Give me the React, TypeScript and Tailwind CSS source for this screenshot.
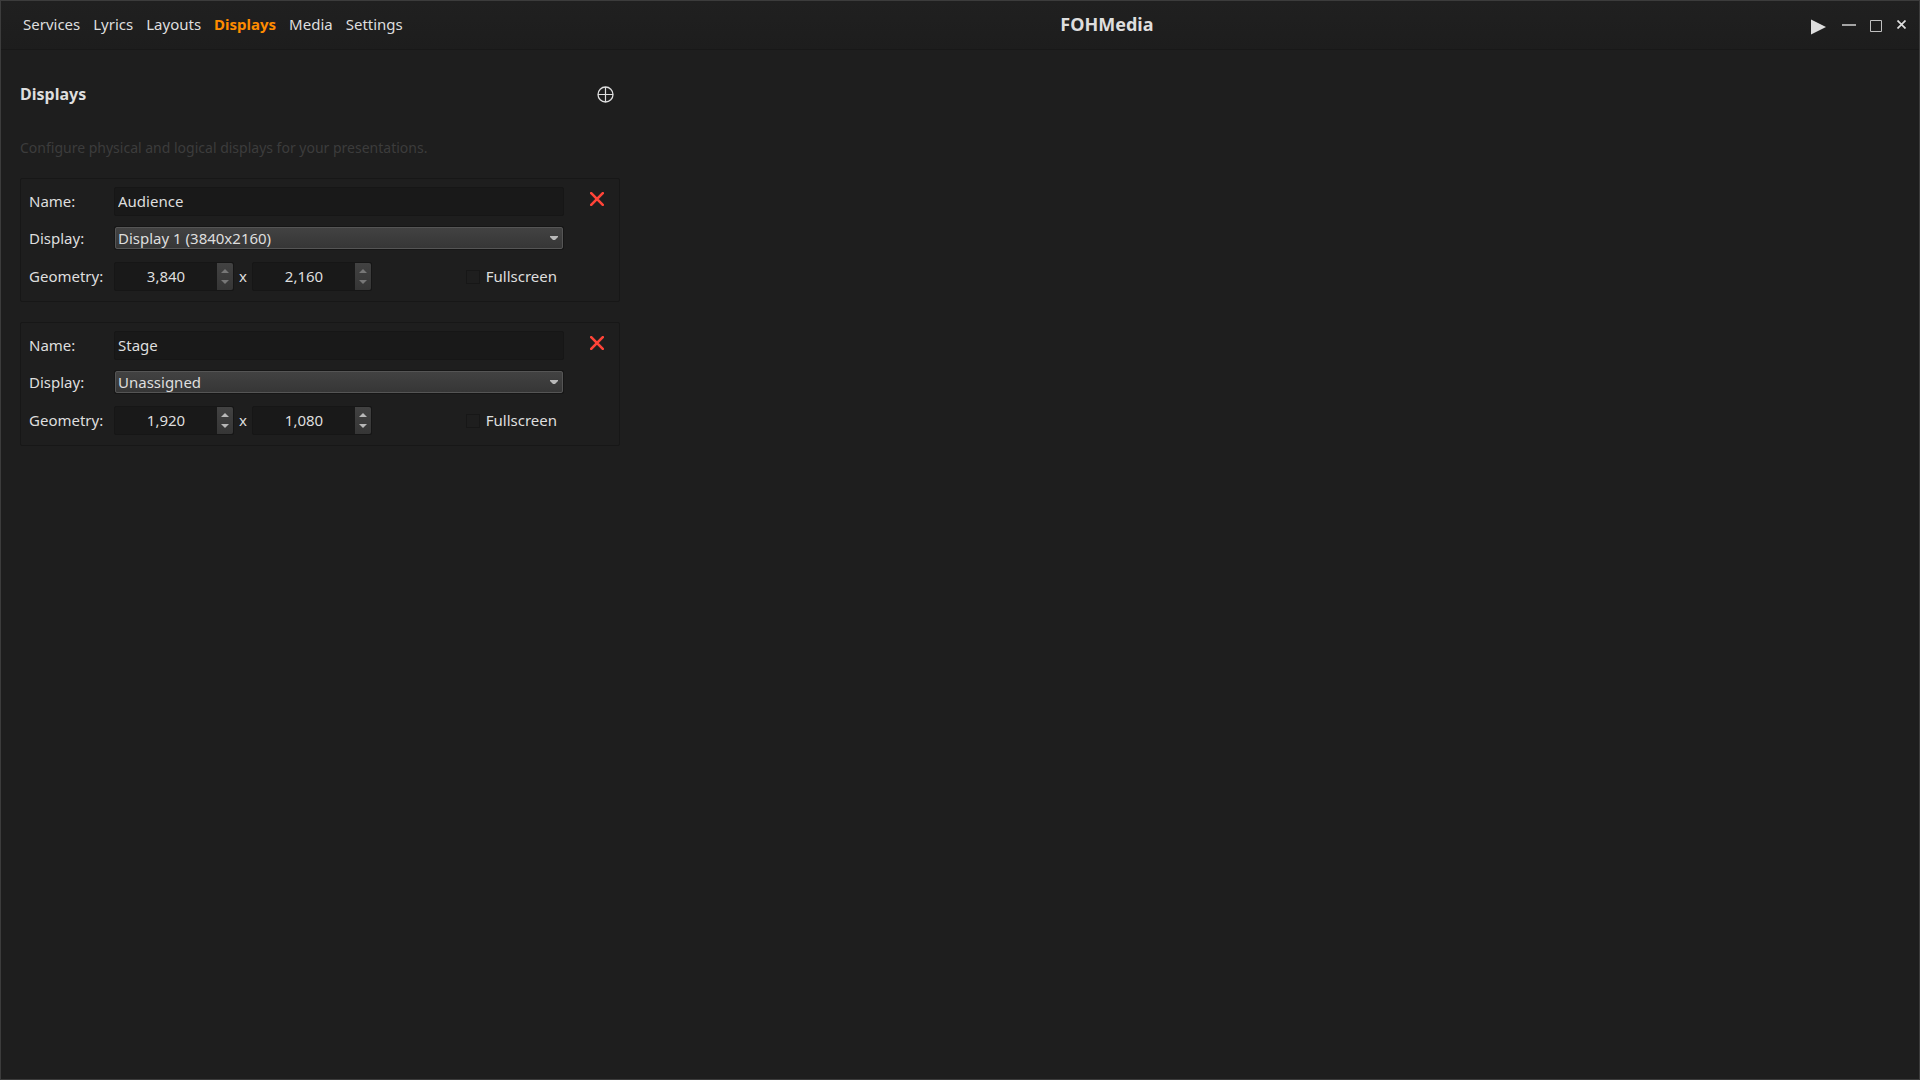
import { useState } from 'react';

type Display = {
  id: string;
  name: string;
  target: string;
  width: string;
  height: string;
  fullscreen: boolean;
};

const navItems = ['Services', 'Lyrics', 'Layouts', 'Displays', 'Media', 'Settings'];

const targets = ['Unassigned', 'Display 1 (3840x2160)'];

const initialDisplays: Display[] = [
  { id: 'audience', name: 'Audience', target: 'Display 1 (3840x2160)', width: '3,840', height: '2,160', fullscreen: false },
  { id: 'stage', name: 'Stage', target: 'Unassigned', width: '1,920', height: '1,080', fullscreen: false }
];

function SpinBox({ id, label, value, disabled, onChange }: {
  id: string;
  label: string;
  value: string;
  disabled: boolean;
  onChange: (value: string) => void;
}) {
  const step = (delta: number) => {
    const next = Math.max(0, Number(value.replace(/,/g, '')) + delta);
    onChange(next.toLocaleString('en-US'));
  };

  const arrow = disabled ? 'fill-[#777777]' : 'fill-[#b8b8b8]';

  return (
    <div className="flex h-[29px] w-[120px] rounded-xs border border-[#161616] bg-[#191919]">
      <input
        id={id}
        aria-label={label}
        value={value}
        readOnly={disabled}
        onChange={(e) => onChange(e.target.value)}
        className="w-0 flex-1 bg-transparent pb-0.5 text-center outline-none"
      />
      <div className="flex w-4 flex-col rounded-r-xs bg-linear-to-b from-[#424242] to-[#363636]">
        <button
          type="button"
          aria-label={`Increase ${label}`}
          disabled={disabled}
          onClick={() => step(1)}
          className="flex flex-1 items-center justify-center pt-0.5"
        >
          <svg width="8" height="4" viewBox="0 0 8 4" className={arrow}>
            <path d="M4 0L8 4H0Z" />
          </svg>
        </button>
        <button
          type="button"
          aria-label={`Decrease ${label}`}
          disabled={disabled}
          onClick={() => step(-1)}
          className="flex flex-1 items-center justify-center pb-0.5"
        >
          <svg width="8" height="4" viewBox="0 0 8 4" className={arrow}>
            <path d="M0 0H8L4 4Z" />
          </svg>
        </button>
      </div>
    </div>
  );
}

function DisplayCard({ display, onChange, onRemove }: {
  display: Display;
  onChange: (patch: Partial<Display>) => void;
  onRemove: () => void;
}) {
  const { id } = display;
  // size is dictated by the hardware once a physical display is assigned
  const locked = display.target !== 'Unassigned';

  return (
    <section className="flex items-start justify-between rounded-xs border border-[#171717] pt-2 pr-2.5 pb-2.5 pl-2">
      <div className="grid flex-1 grid-cols-[85px_1fr] items-center">
        <label htmlFor={`${id}-name`} className="pb-0.5">Name:</label>
        <input
          id={`${id}-name`}
          value={display.name}
          onChange={(e) => onChange({ name: e.target.value })}
          className="h-[29px] min-w-0 rounded-xs border border-[#161616] bg-[#191919] px-[3px] pb-0.5 outline-none"
        />

        <label htmlFor={`${id}-target`} className="pb-0.5">Display:</label>
        <div className="relative mt-2.5 mb-3 h-6 rounded-xs border border-[#161616]">
          <select
            id={`${id}-target`}
            value={display.target}
            onChange={(e) => onChange({ target: e.target.value })}
            className="block h-full w-full appearance-none rounded-xs border border-[#555555] bg-linear-to-b from-[#424242] to-[#363636] px-0.5 leading-5 outline-none"
          >
            {targets.map((target) => (
              <option key={target} value={target} className="bg-[#363636]">{target}</option>
            ))}
          </select>
          <svg width="8" height="4" viewBox="0 0 8 4" className="pointer-events-none absolute top-[9px] right-[5px] fill-[#b8b8b8]">
            <path d="M0 0H8V1L5 4H3L0 1Z" />
          </svg>
        </div>

        <label htmlFor={`${id}-width`} className="pb-0.5">Geometry:</label>
        <div className="flex items-center">
          <SpinBox
            id={`${id}-width`}
            label="width"
            value={display.width}
            disabled={locked}
            onChange={(width) => onChange({ width })}
          />
          <span className="w-[18px] pb-0.5 text-center">x</span>
          <SpinBox
            id={`${id}-height`}
            label="height"
            value={display.height}
            disabled={locked}
            onChange={(height) => onChange({ height })}
          />
          <label className="ml-auto flex items-center gap-1.5 pr-[7px]">
            <input
              type="checkbox"
              checked={display.fullscreen}
              onChange={(e) => onChange({ fullscreen: e.target.checked })}
              className="size-3.5 appearance-none border border-[#171717] checked:bg-[#ff8c00]"
            />
            <span className="pb-0.5">Fullscreen</span>
          </label>
        </div>
      </div>

      <button
        type="button"
        aria-label={`Remove ${display.name}`}
        onClick={onRemove}
        className="ml-[21px] flex size-6 items-center justify-center"
      >
        <svg width="14" height="14" viewBox="0 0 14 14" className="fill-none stroke-[#ff4438]">
          <path d="M1.2 1.2L12.8 12.8M12.8 1.2L1.2 12.8" strokeWidth="2.6" strokeLinecap="round" />
        </svg>
      </button>
    </section>
  );
}

export default function App() {
  const [activeNav, setActiveNav] = useState('Displays');
  const [displays, setDisplays] = useState<Display[]>(initialDisplays);

  const handleChange = (id: string, patch: Partial<Display>) => {
    setDisplays(prev => prev.map(d => (d.id === id ? { ...d, ...patch } : d)));
  };

  const handleAdd = () => {
    setDisplays(prev => [
      ...prev,
      { id: `display-${Date.now()}`, name: 'New display', target: 'Unassigned', width: '1,920', height: '1,080', fullscreen: false }
    ]);
  };

  return (
    <div className="min-h-screen border border-[#3c3c3c] bg-[#1e1e1e] font-['Noto_Sans',sans-serif] text-[15px] leading-5 text-[#dedede]">
      <header className="flex h-[49px] items-center border-b border-[#181818] bg-linear-to-b from-[#202020] to-[#1d1d1d] pr-[13px] pb-0.5 pl-[22px]">
        <nav className="flex gap-[13px]">
          {navItems.map((item) => (
            <button
              key={item}
              type="button"
              onClick={() => setActiveNav(item)}
              className={item === activeNav ? 'font-bold text-[#ff8c00]' : ''}
            >
              {item}
            </button>
          ))}
        </nav>
        <h1 className="flex-1 text-center text-lg leading-6 font-bold">FOHMedia</h1>
        <div className="flex items-center justify-end">
          <button type="button" aria-label="Start output" className="mr-4 pt-1.5">
            <svg width="15" height="16" viewBox="0 0 15 16" className="fill-[#dedede]">
              <path d="M0 0.5L15 8L0 15.5Z" />
            </svg>
          </button>
          <button type="button" aria-label="Minimize" className="mr-3.5 pt-1">
            <svg width="14" height="12" viewBox="0 0 14 12" className="fill-[#a4a4a4]">
              <path d="M0 4H14V6H0Z" />
            </svg>
          </button>
          <button type="button" aria-label="Maximize" className="mr-[15px] pt-1">
            <svg width="12" height="12" viewBox="0 0 12 12" className="fill-none stroke-[#c0c0c0]">
              <path d="M0.5 0.5H11.5V11.5H0.5Z" />
            </svg>
          </button>
          <button type="button" aria-label="Close">
            <svg width="9" height="9" viewBox="0 0 9 9" className="fill-none stroke-[#dedede]">
              <path d="M0.5 0.5L8.5 8.5M8.5 0.5L0.5 8.5" strokeWidth="1.7" />
            </svg>
          </button>
        </div>
      </header>

      <main className="w-full max-w-[619px] pt-[34px] pl-[19px]">
        <div className="flex items-start justify-between pr-1">
          <h2 className="text-base leading-5 font-bold">Displays</h2>
          <button type="button" aria-label="Add display" onClick={handleAdd} className="p-0.5">
            <svg width="17" height="17" viewBox="0 0 17 17" className="fill-none stroke-[#dedede]">
              <circle cx="8.5" cy="8.5" r="7.5" strokeWidth="1.3" />
              <path d="M8.5 1V16M1 8.5H16" strokeWidth="1.2" />
            </svg>
          </button>
        </div>
        <p className="mt-[33px] text-sm leading-5 text-[#3c3c3c]">
          Configure physical and logical displays for your presentations.
        </p>

        <div className="mt-5 flex flex-col gap-5">
          {displays.map((display) => (
            <DisplayCard
              key={display.id}
              display={display}
              onChange={(patch) => handleChange(display.id, patch)}
              onRemove={() => setDisplays(prev => prev.filter(d => d.id !== display.id))}
            />
          ))}
        </div>
      </main>
    </div>
  );
}
